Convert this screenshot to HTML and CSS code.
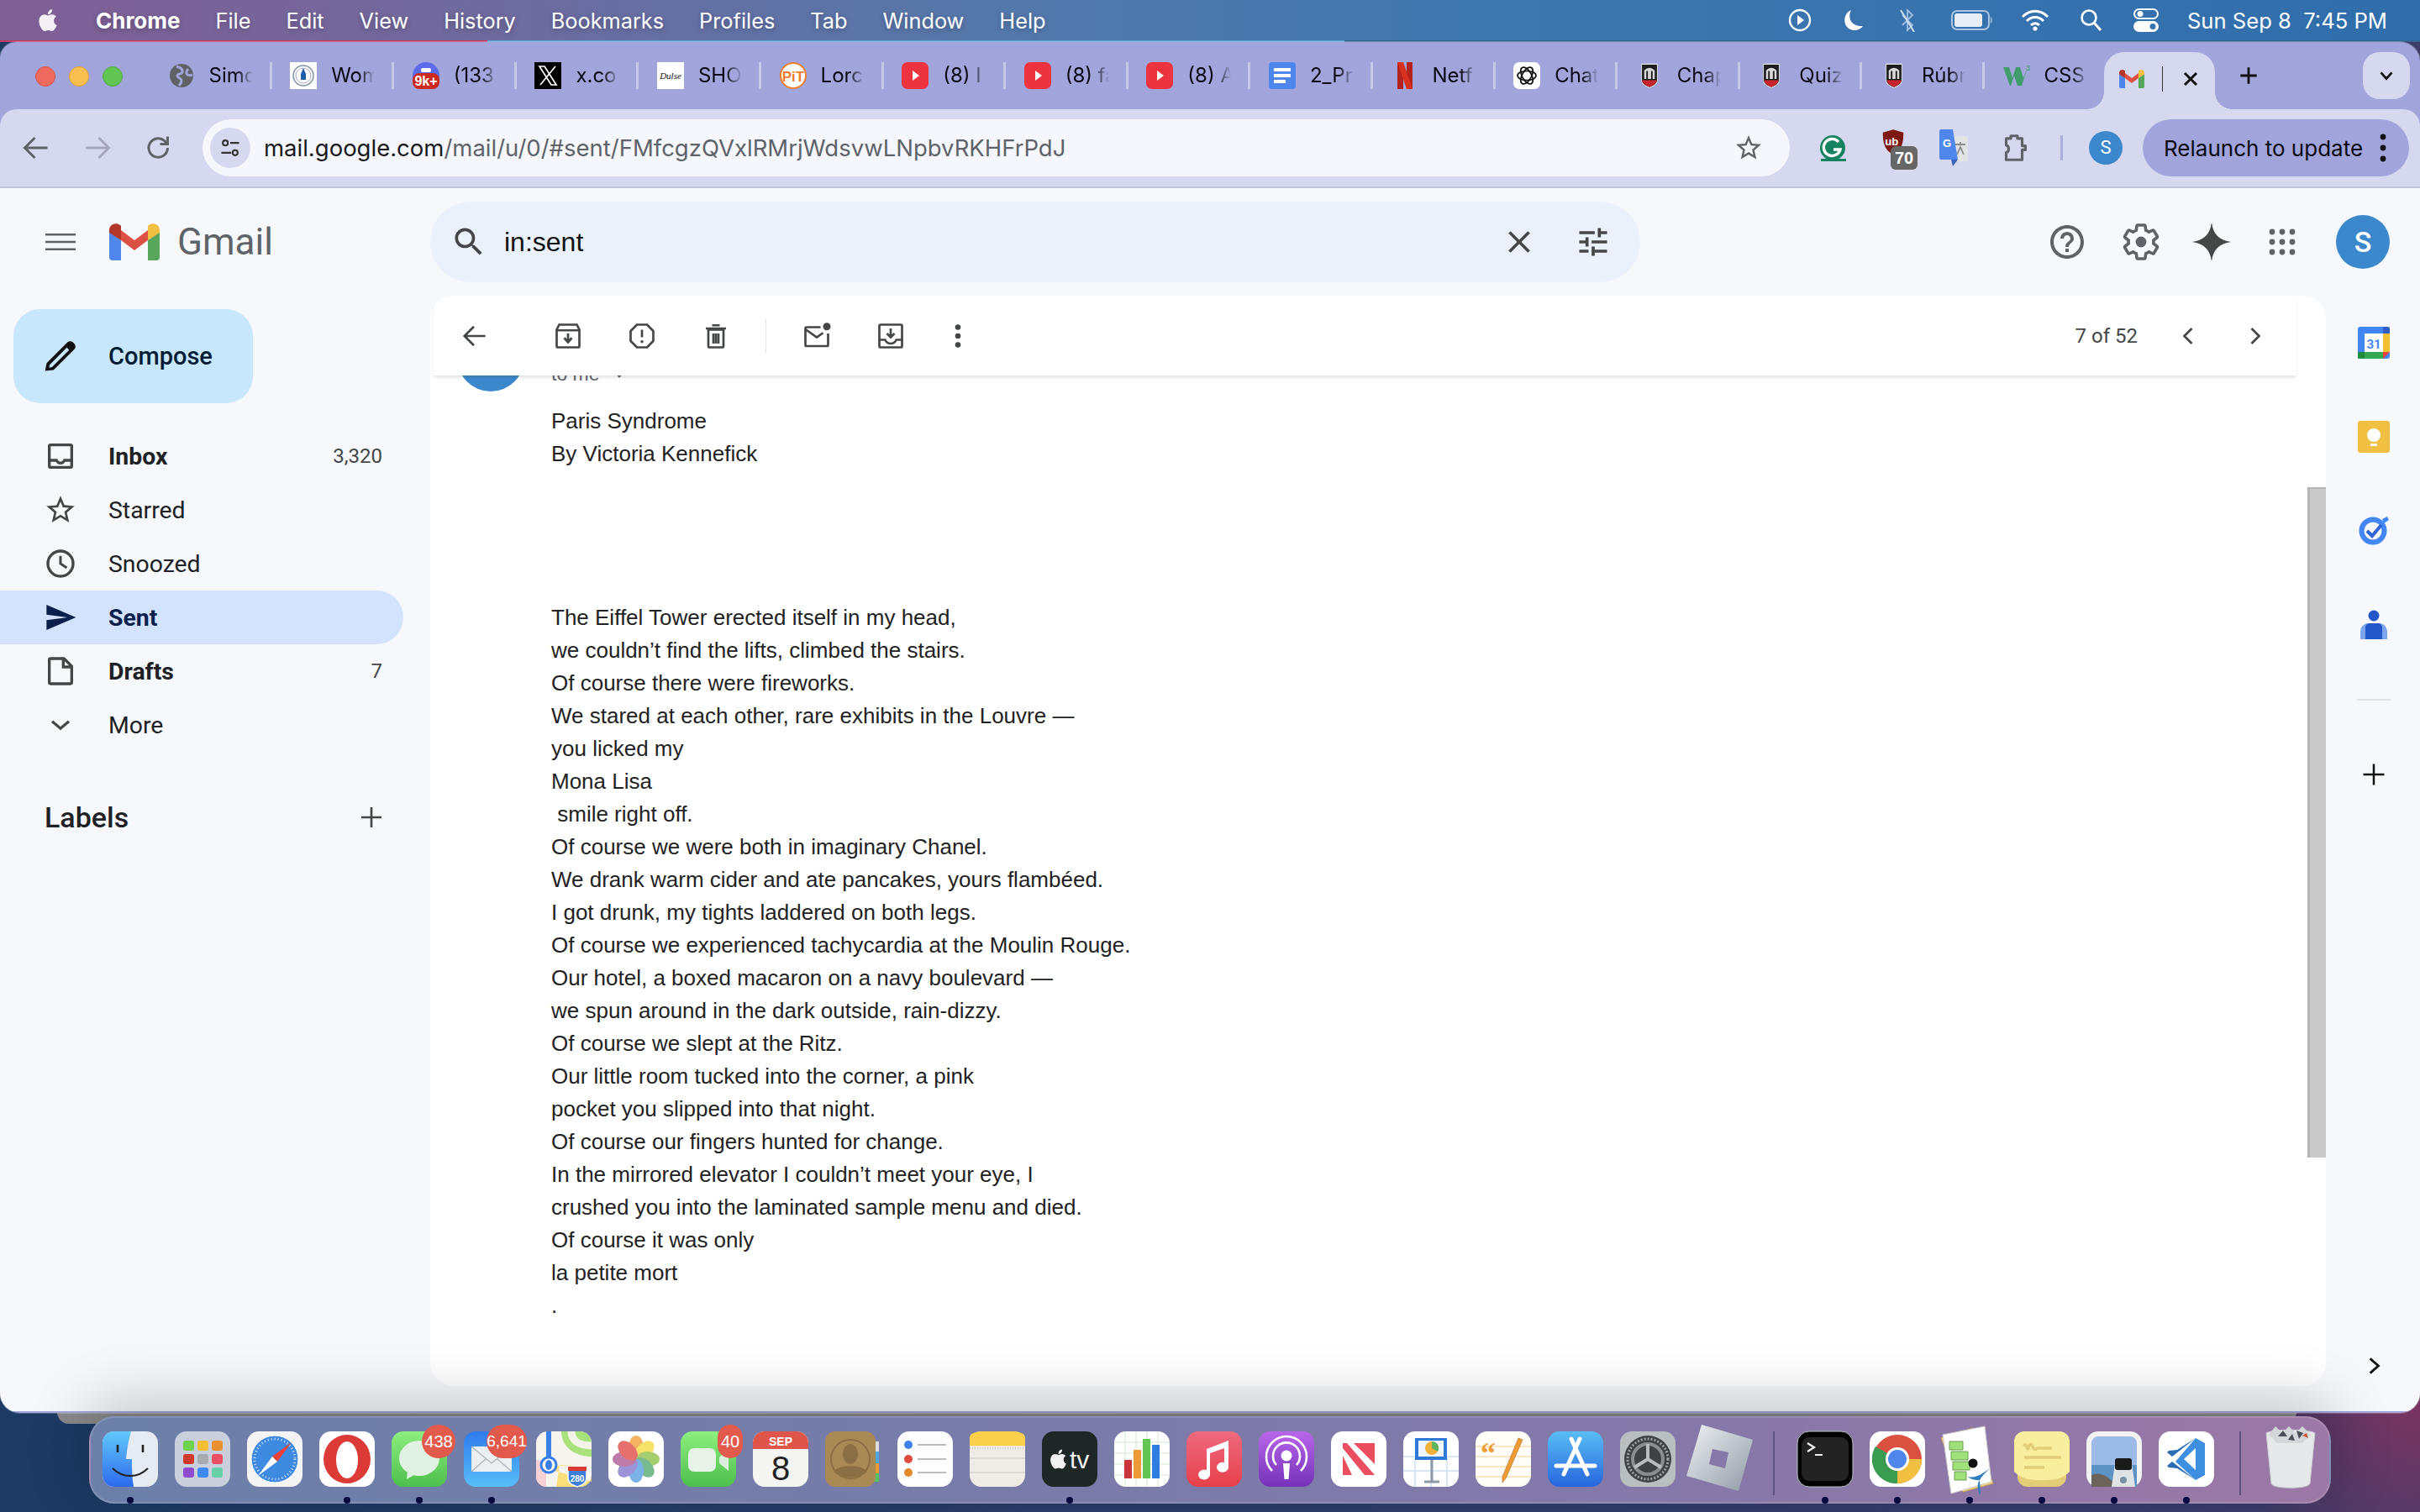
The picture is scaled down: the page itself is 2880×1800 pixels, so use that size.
FILE: index.html
```html
<!DOCTYPE html>
<html lang="en">
<head>
<meta charset="utf-8">
<title>Gmail</title>
<link rel="stylesheet" href="styles.css">
</head>
<body>
<svg class="defs" width="0" height="0" aria-hidden="true">
  <defs>
    <symbol id="apple" viewBox="0 0 24 24"><path d="M12.152 6.896c-.948 0-2.415-1.078-3.96-1.04-2.04.027-3.91 1.183-4.961 3.014-2.117 3.675-.546 9.103 1.519 12.09 1.013 1.454 2.208 3.09 3.792 3.039 1.52-.065 2.09-.987 3.935-.987 1.831 0 2.35.987 3.96.948 1.637-.026 2.676-1.48 3.676-2.948 1.156-1.688 1.636-3.325 1.662-3.415-.039-.013-3.182-1.221-3.22-4.857-.026-3.04 2.48-4.494 2.597-4.559-1.429-2.09-3.623-2.324-4.39-2.376-2-.156-3.675 1.09-4.61 1.09zM15.53 3.83c.843-1.012 1.4-2.427 1.245-3.83-1.207.052-2.662.805-3.532 1.818-.78.896-1.454 2.338-1.273 3.714 1.338.104 2.715-.688 3.559-1.701"/></symbol>
    <symbol id="gm" viewBox="0 0 60 44">
      <path fill="#4f86ec" d="M0 10V40a4 4 0 0 0 4 4H14V20z"/>
      <path fill="#58a65c" d="M46 20V44H56a4 4 0 0 0 4-4V10z"/>
      <path fill="#dd5144" d="M14 8 30 20 46 8V20L30 32 14 20z"/>
      <path fill="#b3362b" d="M0 11V8C0 1 8-2 13 2l1 1V20z"/>
      <path fill="#f1bf42" d="M46 20V3l1-1c5-4 13-1 13 6v3z"/>
    </symbol>
    <symbol id="yt" viewBox="0 0 32 32"><rect y="0" width="32" height="32" rx="7" fill="#ee3340"/><path d="M13 10l8 6-8 6z" fill="#fff"/></symbol>
    <symbol id="uga" viewBox="0 0 32 44" preserveAspectRatio="none">
      <path d="M1 2h30v28c0 7-7 10-15 13C8 40 1 37 1 30z" fill="#1d1d1d" stroke="#e8e8e8" stroke-width="1.500"/>
      <path d="M2 30h28c-1 6-7 9-14 12C9 39 3 36 2 30z" fill="#c8242d"/>
      <path d="M6 28V13q10-9 20 0v15h-4V14h-3v14h-6V14h-3v14z" fill="#d8d8d8"/>
    </symbol>
  </defs>
</svg>

<div class="bg-window"></div>

<header class="menubar">
  <div class="menu-left">
    <svg class="apple" viewBox="0 0 24 24"><use href="#apple"/></svg>
    <span class="menu-app">Chrome</span>
    <span>File</span><span>Edit</span><span>View</span><span>History</span><span>Bookmarks</span><span>Profiles</span><span>Tab</span><span>Window</span><span>Help</span>
  </div>
  <div class="menu-right">
    <svg class="st st-play" viewBox="0 0 28 28"><circle cx="14" cy="14" r="12" fill="none" stroke="#fff" stroke-width="2.4"/><path d="M11 8l8 6-8 6z" fill="#fff"/></svg>
    <svg class="st st-moon" viewBox="0 0 28 28"><path d="M11 2C6 12 12 22 25 21c-4 6-14 7-19 1C1 16 3 5 11 2z" fill="#fff"/></svg>
    <svg class="st st-bt" viewBox="0 0 28 28"><path d="M8 8l12 12-6 6V2l6 6-12 12" fill="none" stroke="#9fc0e2" stroke-width="1.8"/><path d="M6 2l16 26" stroke="#cfe0f0" stroke-width="2"/></svg>
    <svg class="st st-batt" viewBox="0 0 50 24"><rect x="1" y="1" width="44" height="22" rx="6" fill="none" stroke="#a9c7e2" stroke-width="2"/><rect x="4" y="4" width="33" height="16" rx="3" fill="#e8edf5"/><path d="M47 8c2 1 2 7 0 8z" fill="#a9c7e2"/></svg>
    <svg class="st st-wifi" viewBox="0 0 34 26"><path d="M2 9c9-9 21-9 30 0M7 14c6-6 14-6 20 0M12 19c3-3 7-3 10 0" fill="none" stroke="#fff" stroke-width="3"/><circle cx="17" cy="23" r="2.6" fill="#fff"/></svg>
    <svg class="st st-find" viewBox="0 0 28 28"><circle cx="12" cy="11" r="8.5" fill="none" stroke="#fff" stroke-width="2.6"/><path d="M18 17l8 9" stroke="#fff" stroke-width="3"/></svg>
    <svg class="st st-ctl" viewBox="0 0 30 28"><rect x="1" y="1" width="28" height="11" rx="5.5" fill="none" stroke="#fff" stroke-width="2"/><circle cx="8" cy="6.5" r="3.5" fill="#fff"/><rect x="0" y="15" width="30" height="13" rx="6.5" fill="#fff"/><circle cx="23" cy="21.5" r="3.5" fill="#3a74ae"/></svg>
    <span class="clock">Sun Sep 8&nbsp; 7:45 PM</span>
  </div>
</header>
<div class="menu-edge"></div>

<main class="window">
  <div class="tabstrip">
    <div class="lights"><i class="light red"></i><i class="light yellow"></i><i class="light green"></i></div>
    <div class="tab"><svg class="fav" viewBox="0 0 32 32"><circle cx="16" cy="16" r="14" fill="#5f6368"/><path d="M10 5c4 1 8 3 7 7-1 3-5 1-6 4 0 3 5 3 5 6 0 3-2 5-3 6M24 8c-2 2-3 5-1 7 2 1 4 0 6 1" fill="none" stroke="#a1a5db" stroke-width="3"/></svg><span class="tab-title">Simo</span></div>
    <div class="tab"><svg class="fav" viewBox="0 0 32 32"><rect width="32" height="32" fill="#fff"/><circle cx="16" cy="16" r="12" fill="none" stroke="#7f93a8" stroke-width="1.5"/><circle cx="16" cy="16" r="9" fill="#fff" stroke="#aac" stroke-width="1"/><path d="M16 7l3 7v7h-6v-7z" fill="#1d5fa8"/></svg><span class="tab-title">Wom</span></div>
    <div class="tab"><svg class="fav" viewBox="0 0 32 32"><circle cx="16" cy="16" r="16" fill="#5c6bea"/><rect x="10" y="7" width="12" height="5" rx="2" fill="#fff"/><rect y="13" width="32" height="19" rx="8" fill="#cc2a1f"/><text x="16" y="28" class="fav-9k">9k+</text></svg><span class="tab-title">(133</span></div>
    <div class="tab"><svg class="fav" viewBox="0 0 32 32"><rect width="32" height="32" fill="#000"/><path d="M6 5h6l14 22h-6zM25 5 7 27" fill="none" stroke="#fff" stroke-width="1.7"/></svg><span class="tab-title">x.co</span></div>
    <div class="tab"><svg class="fav" viewBox="0 0 32 32"><rect width="32" height="32" fill="#fff"/><text x="16" y="20" class="fav-dulse">Dulse</text></svg><span class="tab-title">SHO</span></div>
    <div class="tab"><svg class="fav" viewBox="0 0 32 32"><circle cx="16" cy="16" r="15" fill="#fff" stroke="#ef7d2e" stroke-width="2"/><text x="16" y="23" class="fav-pit">PiT</text></svg><span class="tab-title">Lorc</span></div>
    <div class="tab"><svg class="fav" viewBox="0 0 32 32"><use href="#yt"/></svg><span class="tab-title">(8) I</span></div>
    <div class="tab"><svg class="fav" viewBox="0 0 32 32"><use href="#yt"/></svg><span class="tab-title">(8) fa</span></div>
    <div class="tab"><svg class="fav" viewBox="0 0 32 32"><use href="#yt"/></svg><span class="tab-title">(8) A</span></div>
    <div class="tab"><svg class="fav" viewBox="0 0 32 32"><rect width="32" height="32" rx="4" fill="#4f86ec"/><path d="M6 7h20v4H6zM6 14h20v4H6zM6 21h14v4H6z" fill="#fff"/></svg><span class="tab-title">2_Pr</span></div>
    <div class="tab"><svg class="fav" viewBox="0 0 32 32"><path d="M7 0h7v32H7zM18 0h7v32h-7z" fill="#b3231c"/><path d="M7 0h7l11 32h-7z" fill="#d8301f"/></svg><span class="tab-title">Netf</span></div>
    <div class="tab"><svg class="fav" viewBox="0 0 32 32"><rect width="32" height="32" rx="7" fill="#fff"/><g fill="none" stroke="#111" stroke-width="1.7"><ellipse cx="16" cy="16" rx="11" ry="5.5"/><ellipse cx="16" cy="16" rx="11" ry="5.5" transform="rotate(60 16 16)"/><ellipse cx="16" cy="16" rx="11" ry="5.5" transform="rotate(120 16 16)"/></g></svg><span class="tab-title">Chat</span></div>
    <div class="tab"><svg class="fav fav-uga" viewBox="0 0 32 44" preserveAspectRatio="none"><use href="#uga"/></svg><span class="tab-title">Chap</span></div>
    <div class="tab"><svg class="fav fav-uga" viewBox="0 0 32 44" preserveAspectRatio="none"><use href="#uga"/></svg><span class="tab-title">Quiz</span></div>
    <div class="tab"><svg class="fav fav-uga" viewBox="0 0 32 44" preserveAspectRatio="none"><use href="#uga"/></svg><span class="tab-title">Rúbr</span></div>
    <div class="tab tab-last"><svg class="fav" viewBox="0 0 32 32"><path d="M0 6h7l4 13 4-13h5l4 13 5-13-7 22h-5l-4-12-4 12H8z" fill="#3f9c6b"/><text x="27" y="10" class="fav-3">3</text></svg><span class="tab-title">CSS</span></div>
    <div class="tab-active">
      <svg class="fav-gm" viewBox="0 0 60 44"><use href="#gm"/></svg>
      <i class="tab-cut"></i>
      <svg class="tab-x" viewBox="0 0 24 24"><path d="M5 5l14 14M19 5 5 19" stroke="#111" stroke-width="3"/></svg>
    </div>
    <svg class="new-tab" viewBox="0 0 24 24"><path d="M12 3v18M3 12h18" stroke="#111" stroke-width="2.6"/></svg>
    <div class="tab-menu"><svg viewBox="0 0 24 24"><path d="M5 8l7 8 7-8" fill="none" stroke="#111" stroke-width="3"/></svg></div>
  </div>

  <div class="toolbar">
    <svg class="nav-ico" viewBox="0 0 24 24"><path d="M21 12H4M11 4l-8 8 8 8" fill="none" stroke="#5f6368" stroke-width="2"/></svg>
    <svg class="nav-ico" viewBox="0 0 24 24"><path d="M3 12h17M13 4l8 8-8 8" fill="none" stroke="#a5a7bd" stroke-width="2"/></svg>
    <svg class="nav-ico" viewBox="0 0 24 24"><path d="M19 12a7.5 7.5 0 1 1-2.5-5.6L19 9M19 3v6h-6" fill="none" stroke="#5f6368" stroke-width="2"/></svg>
    <div class="urlbar">
      <span class="site-info"><svg viewBox="0 0 24 24"><circle cx="7" cy="7" r="2.6" fill="none" stroke="#333" stroke-width="1.8"/><circle cx="17" cy="17" r="2.6" fill="none" stroke="#333" stroke-width="1.8"/><path d="M12 7h9M3 17h10" stroke="#333" stroke-width="1.8"/></svg></span>
      <span class="url"><b>mail.google.com</b>/mail/u/0/#sent/FMfcgzQVxlRMrjWdsvwLNpbvRKHFrPdJ</span>
      <svg class="url-star" viewBox="0 0 24 24"><path d="M22 9.24l-7.19-.62L12 2 9.19 8.63 2 9.24l5.46 4.73L5.82 21 12 17.27 18.18 21l-1.63-7.03L22 9.24zM12 15.4l-3.76 2.27 1-4.28-3.32-2.88 4.38-.38L12 6.1l1.71 4.04 4.38.38-3.32 2.88 1 4.28L12 15.4z" fill="#5f6368"/></svg>
    </div>
    <div class="ext first-ext"><svg class="ext-g" viewBox="0 0 32 32"><circle cx="16" cy="16" r="15" fill="#15835f"/><path d="M23 9a10 10 0 1 0 2 9h-8" fill="none" stroke="#fff" stroke-width="3.4"/><path d="M2 29h30v3H2z" fill="#15835f"/></svg></div>
    <div class="ext ext-ub"><svg class="ext-shield" viewBox="0 0 32 36"><path d="M16 1l14 4c0 14-2 24-14 30C4 29 2 19 2 5z" fill="#7e1a14"/><text x="14" y="23" class="ub-text">ub</text></svg><span class="ext-badge">70</span></div>
    <div class="ext"><svg class="ext-tr" viewBox="0 0 34 44"><path d="M14 8h18a2 2 0 0 1 2 2v26a2 2 0 0 1-2 2H14z" fill="#e3e3e3"/><path d="M19 18h12M25 15v3M21 30l4-9 4 9" fill="none" stroke="#8a8a8a" stroke-width="1.8"/><path d="M2 0h14l6 36H2a2 2 0 0 1-2-2V2a2 2 0 0 1 2-2z" fill="#4f86ec"/><path d="M14 36l2 8 6-8z" fill="#3a62b8"/><text x="9" y="21" class="tr-text">G</text></svg></div>
    <div class="ext"><svg class="ext-puzzle" viewBox="0 0 24 24"><path d="M6 5h3.500V3h5v2H18v5.500h2.500v3H18V21H6v-5.500c2.500-.5 2.500-5 0-5.500z" fill="none" stroke="#5f6368" stroke-width="2" stroke-linejoin="round"/></svg></div>
    <i class="tool-div"></i>
    <span class="tool-avatar">S</span>
    <div class="relaunch"><span>Relaunch to update</span><svg viewBox="0 0 8 36"><circle cx="4" cy="5" r="3.4"/><circle cx="4" cy="18" r="3.4"/><circle cx="4" cy="31" r="3.4"/></svg></div>
  </div>

  <div class="gmail">
    <div class="g-head">
      <div class="g-logo">
        <svg class="g-menu" viewBox="0 0 36 20"><path d="M0 0h36v2.6H0zM0 8.7h36v2.6H0zM0 17.4h36V20H0z" fill="#5f6368"/></svg>
        <svg class="g-m" viewBox="0 0 60 44"><use href="#gm"/></svg>
        <span class="g-word">Gmail</span>
      </div>
      <div class="search">
        <svg class="s-ico" viewBox="0 0 24 24"><path d="M15.5 14h-.79l-.28-.27C15.41 12.59 16 11.11 16 9.5 16 5.91 13.09 3 9.5 3S3 5.91 3 9.5 5.91 16 9.5 16c1.61 0 3.09-.59 4.23-1.57l.27.28v.79l5 4.99L20.49 19l-4.99-5zm-6 0C7.01 14 5 11.99 5 9.5S7.01 5 9.5 5 14 7.01 14 9.5 11.99 14 9.5 14z"/></svg>
        <span class="s-text">in:sent</span>
        <svg class="s-ico s-close" viewBox="0 0 24 24"><path d="M19 6.41L17.59 5 12 10.59 6.41 5 5 6.41 10.59 12 5 17.59 6.41 19 12 13.41 17.59 19 19 17.59 13.41 12z"/></svg>
        <svg class="s-ico s-tune" viewBox="0 0 24 24"><path d="M3 17v2h6v-2H3zM3 5v2h10V5H3zm10 16v-2h8v-2h-8v-2h-2v6h2zM7 9v2H3v2h4v2h2V9H7zm14 4v-2H11v2h10zm-6-4h2V7h4V5h-4V3h-2v6z"/></svg>
      </div>
      <div class="g-actions">
        <svg class="g-ico g-help" viewBox="0 0 24 24"><path fill="#5f6368" d="M11 18h2v-2h-2v2zm1-16C6.48 2 2 6.48 2 12s4.48 10 10 10 10-4.48 10-10S17.52 2 12 2zm0 18c-4.41 0-8-3.59-8-8s3.59-8 8-8 8 3.59 8 8-3.59 8-8 8zm0-14c-2.21 0-4 1.79-4 4h2c0-1.1.9-2 2-2s2 .9 2 2c0 2-3 1.75-3 5h2c0-2.25 3-2.5 3-5 0-2.21-1.79-4-4-4z"/></svg>
        <svg class="g-ico g-gear" viewBox="0 0 24 24"><path fill="none" stroke="#5f6368" stroke-width="1.800" d="M19.43 12.98c.04-.32.07-.64.07-.98s-.03-.66-.07-.98l2.11-1.65c.19-.15.24-.42.12-.64l-2-3.46c-.12-.22-.39-.3-.61-.22l-2.49 1c-.52-.4-1.08-.73-1.69-.98l-.38-2.65C14.46 2.18 14.25 2 14 2h-4c-.25 0-.46.18-.49.42l-.38 2.65c-.61.25-1.17.59-1.69.98l-2.49-1c-.23-.09-.49 0-.61.22l-2 3.46c-.13.22-.07.49.12.64l2.11 1.65c-.04.32-.07.65-.07.98s.03.66.07.98l-2.11 1.65c-.19.15-.24.42-.12.64l2 3.46c.12.22.39.3.61.22l2.49-1c.52.4 1.08.73 1.69.98l.38 2.65c.03.24.24.42.49.42h4c.25 0 .46-.18.49-.42l.38-2.65c.61-.25 1.17-.59 1.69-.98l2.49 1c.23.09.49 0 .61-.22l2-3.46c.12-.22.07-.49-.12-.64l-2.11-1.65z"/><circle cx="12" cy="12" r="3.200" fill="#5f6368"/></svg>
        <svg class="g-ico g-spark" viewBox="0 0 46 46"><path d="M23 0c2 14 9 21 23 23-14 2-21 9-23 23-2-14-9-21-23-23 14-2 21-9 23-23z" fill="#444746"/></svg>
        <svg class="g-ico g-apps" viewBox="0 0 32 32"><g fill="#5f6368"><circle cx="4" cy="4" r="3.4"/><circle cx="16" cy="4" r="3.4"/><circle cx="28" cy="4" r="3.4"/><circle cx="4" cy="16" r="3.4"/><circle cx="16" cy="16" r="3.4"/><circle cx="28" cy="16" r="3.4"/><circle cx="4" cy="28" r="3.4"/><circle cx="16" cy="28" r="3.4"/><circle cx="28" cy="28" r="3.4"/></g></svg>
        <span class="g-avatar">S</span>
      </div>
    </div>

    <div class="g-body">
      <nav class="sidebar">
        <div class="compose">
          <svg viewBox="0 0 24 24"><path d="M2 21.5l1-5L16.5 3a2.6 2.6 0 0 1 3.6 0l.9.9a2.6 2.6 0 0 1 0 3.6L7.5 21zM5 17.6l-.4 1.9 1.900-.4L17.600 8l-1.500-1.600z" fill="#111"/></svg>
          <span>Compose</span>
        </div>
        <ul class="nav">
          <li class="nav-item strong"><svg viewBox="0 0 24 24"><path fill="#444746" d="M19 3H5a2 2 0 0 0-2 2v14a2 2 0 0 0 2 2h14a2 2 0 0 0 2-2V5a2 2 0 0 0-2-2zm0 16H5v-3h3.600c.7 1.200 2 2 3.400 2s2.700-.8 3.400-2H19zm0-5h-4.900c0 1.100-.9 2-2.100 2s-2.100-.9-2.100-2H5V5h14z"/></svg><span>Inbox</span><em>3,320</em></li>
          <li class="nav-item"><svg viewBox="0 0 24 24"><path fill="#444746" d="M22 9.24l-7.19-.62L12 2 9.19 8.63 2 9.24l5.46 4.73L5.82 21 12 17.27 18.18 21l-1.63-7.03L22 9.24zM12 15.4l-3.76 2.27 1-4.28-3.32-2.88 4.38-.38L12 6.1l1.71 4.04 4.38.38-3.32 2.88 1 4.28L12 15.4z"/></svg><span>Starred</span></li>
          <li class="nav-item"><svg viewBox="0 0 24 24"><circle cx="12" cy="12" r="9" fill="none" stroke="#444746" stroke-width="2"/><path d="M12 6.500V12l4.500 3" fill="none" stroke="#444746" stroke-width="1.800"/></svg><span>Snoozed</span></li>
          <li class="nav-item active"><svg viewBox="0 0 24 24"><path fill="#0b1f4d" d="M2.010 21L23 12 2.010 3 2 10l15 2-15 2z"/></svg><span>Sent</span></li>
          <li class="nav-item strong"><svg viewBox="0 0 24 24"><path fill="none" stroke="#444746" stroke-width="2" d="M5 3h9.500L20 8.500V20a1 1 0 0 1-1 1H5a1 1 0 0 1-1-1V4a1 1 0 0 1 1-1zM14 3v6h6"/></svg><span>Drafts</span><em>7</em></li>
          <li class="nav-item"><svg viewBox="0 0 24 24"><path fill="none" stroke="#444746" stroke-width="2" d="M6 9.500l6 5 6-5"/></svg><span>More</span></li>
        </ul>
        <div class="labels"><span>Labels</span><svg viewBox="0 0 24 24"><path d="M12 3v18M3 12h18" stroke="#444746" stroke-width="2"/></svg></div>
      </nav>

      <section class="card">
        <div class="m-bar">
          <svg class="m-ico m-back" viewBox="0 0 24 24"><path d="M21 12H5M12 4.500 4.500 12l7.500 7.500" fill="none" stroke="#444746" stroke-width="2"/></svg>
          <svg class="m-ico" viewBox="0 0 24 24"><path d="M5 3h14l2 4v13a1 1 0 0 1-1 1H4a1 1 0 0 1-1-1V7zM3 7.500h18" fill="none" stroke="#444746" stroke-width="2"/><path d="M12 10v6M9 13.500l3 3.500 3-3.500" fill="none" stroke="#444746" stroke-width="2"/></svg>
          <svg class="m-ico" viewBox="0 0 24 24"><path d="M8 3h8l5 5v8l-5 5H8l-5-5V8z" fill="none" stroke="#444746" stroke-width="2"/><path d="M12 7v6" stroke="#444746" stroke-width="2"/><circle cx="12" cy="16.500" r="1.200" fill="#444746"/></svg>
          <svg class="m-ico" viewBox="0 0 24 24"><path d="M6 7h12v13a1 1 0 0 1-1 1H7a1 1 0 0 1-1-1zM4 6h16M9 3.500h6M10 10v8M12 10v8M14 10v8" fill="none" stroke="#444746" stroke-width="2"/></svg>
          <i class="m-div"></i>
          <svg class="m-ico" viewBox="0 0 24 24"><path d="M15 5H4a1 1 0 0 0-1 1v13a1 1 0 0 0 1 1h16a1 1 0 0 0 1-1v-9M3.500 7l8.500 6 5-3.500" fill="none" stroke="#444746" stroke-width="2"/><circle cx="20" cy="4.500" r="3" fill="#444746"/></svg>
          <svg class="m-ico" viewBox="0 0 24 24"><path d="M4 3h16a1 1 0 0 1 1 1v16a1 1 0 0 1-1 1H4a1 1 0 0 1-1-1V4a1 1 0 0 1 1-1z" fill="none" stroke="#444746" stroke-width="2"/><path d="M12 6v6M9 10l3 3 3-3M3 15h4.500c1 2 2.500 3 4.500 3s3.500-1 4.500-3H21" fill="none" stroke="#444746" stroke-width="2"/></svg>
          <svg class="m-ico m-more" viewBox="0 0 24 24"><circle cx="12" cy="5" r="2.200" fill="#444746"/><circle cx="12" cy="12" r="2.200" fill="#444746"/><circle cx="12" cy="19" r="2.200" fill="#444746"/></svg>
          <div class="pager">
            <span>7 of 52</span>
            <svg class="m-ico" viewBox="0 0 24 24"><path d="M15 6l-6 6 6 6" fill="none" stroke="#444746" stroke-width="2"/></svg>
            <svg class="m-ico" viewBox="0 0 24 24"><path d="M9 6l6 6-6 6" fill="none" stroke="#444746" stroke-width="2"/></svg>
          </div>
        </div>
        <div class="scroller">
          <article class="msg">
            <span class="msg-avatar"></span>
            <div class="msg-main">
              <div class="to-me">to me <svg viewBox="0 0 10 6"><path d="M0 0h10L5 6z" fill="#5f6368"/></svg></div>
              <div class="msg-head"><div>Paris Syndrome</div><div>By Victoria Kennefick</div></div>
              <div class="poem">
                <div>The Eiffel Tower erected itself in my head,</div>
                <div>we couldn’t find the lifts, climbed the stairs.</div>
                <div>Of course there were fireworks.</div>
                <div>We stared at each other, rare exhibits in the Louvre — </div>
                <div>you licked my</div>
                <div>Mona Lisa</div>
                <div>&nbsp;smile right off.</div>
                <div>Of course we were both in imaginary Chanel.</div>
                <div>We drank warm cider and ate pancakes, yours flambéed.</div>
                <div>I got drunk, my tights laddered on both legs.</div>
                <div>Of course we experienced tachycardia at the Moulin Rouge.</div>
                <div>Our hotel, a boxed macaron on a navy boulevard — </div>
                <div>we spun around in the dark outside, rain-dizzy.</div>
                <div>Of course we slept at the Ritz.</div>
                <div>Our little room tucked into the corner, a pink</div>
                <div>pocket you slipped into that night.</div>
                <div>Of course our fingers hunted for change.</div>
                <div>In the mirrored elevator I couldn’t meet your eye, I</div>
                <div>crushed you into the laminated sample menu and died.</div>
                <div>Of course it was only</div>
                <div>la petite mort</div>
                <div>.</div>
              </div>
            </div>
          </article>
          <div class="scrollbar"></div>
        </div>
      </section>

      <aside class="sidepanel">
        <svg class="sp-ico sp-first" viewBox="0 0 38 38"><rect width="38" height="38" rx="3" fill="#4285f4"/><path d="M30 0h5a3 3 0 0 1 3 3v5h-8z" fill="#2f5fc4"/><rect x="30" y="8" width="8" height="22" fill="#f4c030"/><rect y="30" width="30" height="8" fill="#34a853"/><path d="M0 30h8v8H3a3 3 0 0 1-3-3z" fill="#1e8e3e"/><path d="M30 30h8l-8 8z" fill="#ea4335"/><rect x="8" y="8" width="22" height="22" fill="#fff"/><text x="19" y="26" class="cal-31">31</text></svg>
        <svg class="sp-ico" viewBox="0 0 38 38"><rect width="38" height="38" rx="3" fill="#f1bf42"/><circle cx="19" cy="17" r="8" fill="#fff"/><rect x="15" y="27" width="8" height="3" fill="#fff"/></svg>
        <svg class="sp-ico" viewBox="0 0 38 38"><circle cx="18" cy="19" r="13.500" fill="none" stroke="#4285f4" stroke-width="6"/><path d="M11 19l6 6 11-13" fill="none" stroke="#2f62d6" stroke-width="4"/><path d="M29 5l6-3 2 4-6 4z" fill="#4285f4"/></svg>
        <svg class="sp-ico sp-last" viewBox="0 0 38 38"><circle cx="19" cy="8" r="6.500" fill="#2458c8"/><path d="M3 36V28c0-7 4-10 8-11h16c4 1 8 4 8 11v8z" fill="#7ea4ee"/><path d="M9 36V22c0-3 3-5 5-5h10c2 0 5 2 5 5v14z" fill="#2458c8"/></svg>
        <i class="sp-div"></i>
        <svg class="sp-plus" viewBox="0 0 24 24"><path d="M12 2v20M2 12h20" stroke="#111" stroke-width="2"/></svg>
        <svg class="sp-chev" viewBox="0 0 24 24"><path d="M8 4l9 8-9 8" fill="none" stroke="#111" stroke-width="2.600"/></svg>
      </aside>
    </div>
  </div>
</main>

<footer class="dock">
  <div class="app run"><svg viewBox="0 0 66 66"><defs><linearGradient id="fi" x1="0" y1="0" x2="0" y2="1"><stop offset="0" stop-color="#62c8fb"/><stop offset="1" stop-color="#2d6bee"/></linearGradient></defs><rect width="66" height="66" rx="14" fill="#e6ebf1"/><path d="M14 0h20c-3 10-5 22-6 33h7c0 11 0 22 2 33H14A14 14 0 0 1 0 52V14A14 14 0 0 1 14 0z" fill="url(#fi)"/><path d="M18 16v9M48 16v9" stroke="#222" stroke-width="2.600"/><path d="M12 44c12 12 30 12 42 0" fill="none" stroke="#222" stroke-width="2"/></svg></div>
  <div class="app"><svg viewBox="0 0 66 66"><rect width="66" height="66" rx="14" fill="#c9cfdd"/><g><rect x="10" y="11" width="13" height="12" rx="3" fill="#6fd24e"/><rect x="27" y="11" width="13" height="12" rx="3" fill="#f5bd32"/><rect x="44" y="11" width="13" height="12" rx="3" fill="#ea9030"/><rect x="10" y="27" width="13" height="12" rx="3" fill="#cf3a2c"/><rect x="27" y="27" width="13" height="12" rx="3" fill="#a8acb2"/><rect x="44" y="27" width="13" height="12" rx="3" fill="#ea5064"/><rect x="10" y="43" width="13" height="12" rx="3" fill="#8f4bd0"/><rect x="27" y="43" width="13" height="12" rx="3" fill="#3d8bf2"/><rect x="44" y="43" width="13" height="12" rx="3" fill="#66d0a8"/></g></svg></div>
  <div class="app"><svg viewBox="0 0 66 66"><rect width="66" height="66" rx="14" fill="#f4f4f4"/><circle cx="33" cy="33" r="28" fill="#3e8ae0" stroke="#fff" stroke-width="1"/><circle cx="33" cy="33" r="24" fill="none" stroke="#cde1f7" stroke-width="3" stroke-dasharray="1 3"/><path d="M53 13 36 36l-6-6z" fill="#ee4036"/><path d="M13 53l17-23 6 6z" fill="#fff"/></svg></div>
  <div class="app run"><svg viewBox="0 0 66 66"><rect width="66" height="66" rx="14" fill="#fff"/><ellipse cx="33" cy="33" rx="28" ry="29" fill="#dc3a36"/><ellipse cx="33" cy="34" rx="13" ry="22" fill="#fff"/></svg></div>
  <div class="app run"><svg viewBox="0 0 66 66"><defs><linearGradient id="gr" x1="0" y1="0" x2="0" y2="1"><stop offset="0" stop-color="#8def80"/><stop offset="1" stop-color="#4dbf4c"/></linearGradient></defs><rect width="66" height="66" rx="14" fill="url(#gr)"/><ellipse cx="33" cy="32" rx="24" ry="21" fill="#e2f2e2"/><path d="M19 47l-1 10 12-7z" fill="#e2f2e2"/></svg><span class="badge badge-msg">438</span></div>
  <div class="app run"><svg viewBox="0 0 66 66"><defs><linearGradient id="bl" x1="0" y1="0" x2="0" y2="1"><stop offset="0" stop-color="#2f7bee"/><stop offset="1" stop-color="#58bef8"/></linearGradient></defs><rect width="66" height="66" rx="14" fill="url(#bl)"/><rect x="9" y="18" width="48" height="30" rx="3" fill="#eceff2"/><path d="M9 18l24 20 24-20M9 48l18-16M57 48 39 32" fill="none" stroke="#aeb4ba" stroke-width="1.200"/></svg><span class="badge badge-mail">6,641</span></div>
  <div class="app"><svg viewBox="0 0 66 66"><rect width="66" height="66" rx="14" fill="#f7f3ee"/><path d="M30 0h22a14 14 0 0 1 14 14v16C48 30 30 20 30 0z" fill="#a9e27b"/><path d="M42 0c0 10 8 17 24 17" fill="none" stroke="#f3f3e8" stroke-width="9"/><path d="M0 40 66 60V52A14 14 0 0 1 52 66H24L28 40 66 42z" fill="#f7dd6d" opacity=".9"/><path d="M0 34h12v32A12 12 0 0 1 0 52z" fill="#f8d1d6"/><rect x="12" y="0" width="6" height="40" fill="#3a7fe6"/><circle cx="15" cy="40" r="9" fill="#fff" stroke="#3a7fe6" stroke-width="3"/><ellipse cx="15" cy="40" rx="4" ry="6" fill="#3a7fe6"/><path d="M38 42h22v14c0 6-6 8-11 10-5-2-11-4-11-10z" fill="#3d7fd8" stroke="#fff" stroke-width="1.500"/><rect x="38" y="42" width="22" height="5" fill="#d93a32"/><text x="49" y="60" class="map-280">280</text></svg></div>
  <div class="app"><svg viewBox="0 0 66 66"><rect width="66" height="66" rx="14" fill="#fff"/><g opacity=".75"><ellipse cx="33" cy="19" rx="9" ry="14" fill="#f09a2e"/><ellipse cx="33" cy="19" rx="9" ry="14" fill="#f2d93a" transform="rotate(45 33 33)"/><ellipse cx="33" cy="19" rx="9" ry="14" fill="#89bd3e" transform="rotate(90 33 33)"/><ellipse cx="33" cy="19" rx="9" ry="14" fill="#4da36a" transform="rotate(135 33 33)"/><ellipse cx="33" cy="19" rx="9" ry="14" fill="#4f9ae0" transform="rotate(180 33 33)"/><ellipse cx="33" cy="19" rx="9" ry="14" fill="#7a70c8" transform="rotate(225 33 33)"/><ellipse cx="33" cy="19" rx="9" ry="14" fill="#a8508e" transform="rotate(270 33 33)"/><ellipse cx="33" cy="19" rx="9" ry="14" fill="#dd4240" transform="rotate(315 33 33)"/></g></svg></div>
  <div class="app"><svg viewBox="0 0 66 66"><rect width="66" height="66" rx="14" fill="url(#gr)"/><rect x="9" y="20" width="33" height="28" rx="7" fill="#e6f3e6"/><path d="M46 31 57 21v26L46 38z" fill="#dcefdc"/></svg><span class="badge badge-ft">40</span></div>
  <div class="app"><svg viewBox="0 0 66 66"><rect width="66" height="66" rx="14" fill="#f5f5f3"/><path d="M14 0h38a14 14 0 0 1 14 14v7H0v-7A14 14 0 0 1 14 0z" fill="#e0554a"/><text x="33" y="17" class="cal-mon">SEP</text><text x="33" y="58" class="cal-day">8</text></svg></div>
  <div class="app"><svg viewBox="0 0 66 66"><path d="M58 12h6v12h-6z" fill="#ddd"/><path d="M58 24h6v14h-6z" fill="#4fa8e0"/><path d="M58 38h6v12h-6z" fill="#e89a2e"/><path d="M58 50h6v10h-6z" fill="#56c05a"/><rect width="60" height="66" rx="12" fill="#a98a55"/><circle cx="30" cy="33" r="23" fill="none" stroke="#8b6f44" stroke-width="2"/><ellipse cx="30" cy="27" rx="9" ry="12" fill="#8b6f44"/><path d="M10 48c5-9 35-9 40 0-10 9-30 9-40 0z" fill="#8b6f44"/></svg></div>
  <div class="app"><svg viewBox="0 0 66 66"><rect width="66" height="66" rx="14" fill="#fdfdfd"/><circle cx="13" cy="16" r="5" fill="#3f80ea"/><circle cx="13" cy="33" r="5" fill="#df4a3e"/><circle cx="13" cy="49" r="5" fill="#e58a2c"/><path d="M24 16h34M24 33h34M24 49h34" stroke="#bdbdbd" stroke-width="1.800"/></svg></div>
  <div class="app"><svg viewBox="0 0 66 66"><rect width="66" height="66" rx="14" fill="#efece6"/><path d="M14 0h38a14 14 0 0 1 14 14v19H0V14A14 14 0 0 1 14 0z" transform="scale(1 .52)" fill="#f9cf4c"/><path d="M0 20h66" stroke="#ccc" stroke-width="2" stroke-dasharray="1 2"/><path d="M0 32h66M0 49h66" stroke="#d6d4cf" stroke-width="1.500"/></svg></div>
  <div class="app run"><svg viewBox="0 0 66 66"><rect width="66" height="66" rx="14" fill="#1e2725"/><use href="#apple" x="8" y="20" width="23" height="26" fill="#f2f2f2"/><text x="33" y="44" class="tv-text">tv</text></svg></div>
  <div class="app"><svg viewBox="0 0 66 66"><rect width="66" height="66" rx="14" fill="#fff"/><path d="M0 13h66M0 26h66M0 39h66M0 52h66M13 0v66M26 0v66M39 0v66M52 0v66" stroke="#cfeacb" stroke-width="1"/><rect x="12" y="34" width="9" height="22" fill="#c8353a"/><rect x="23" y="22" width="9" height="34" fill="#ee9a38"/><rect x="34" y="9" width="9" height="47" fill="#61c652"/><rect x="45" y="16" width="9" height="40" fill="#2f7de0"/></svg></div>
  <div class="app"><svg viewBox="0 0 66 66"><defs><linearGradient id="mu" x1="0" y1="0" x2="0" y2="1"><stop offset="0" stop-color="#ef6a80"/><stop offset="1" stop-color="#e6404a"/></linearGradient></defs><rect width="66" height="66" rx="14" fill="url(#mu)"/><path d="M24 21 50 11v32a7 6 0 1 1-5-6V20L28 26v26a7 6 0 1 1-4-6z" fill="#fff"/></svg></div>
  <div class="app"><svg viewBox="0 0 66 66"><defs><linearGradient id="po" x1="0" y1="0" x2="0" y2="1"><stop offset="0" stop-color="#b967ea"/><stop offset="1" stop-color="#7432b8"/></linearGradient></defs><rect width="66" height="66" rx="14" fill="url(#po)"/><circle cx="33" cy="29" r="6.500" fill="#fff"/><path d="M29 38h8l-1.500 19h-5z" fill="#fff"/><path d="M21 40a16 16 0 1 1 24 0M16 47a24 24 0 1 1 34 0" fill="none" stroke="#fff" stroke-width="2.600"/></svg></div>
  <div class="app"><svg viewBox="0 0 66 66"><rect width="66" height="66" rx="14" fill="#fff"/><path d="M14 29v23h11zM14 14h5l33 38H40L14 20zM27 14h25v25z" fill="#ea4e60"/></svg></div>
  <div class="app"><svg viewBox="0 0 66 66"><rect width="66" height="66" rx="14" fill="#fff"/><path d="M0 30h66M0 47h66M14 30v36M33 30v36M52 30v36" stroke="#d9e6f3" stroke-width="2"/><rect x="14" y="8" width="38" height="26" fill="#2f78d8"/><rect x="18" y="11" width="30" height="19" fill="#eef5fb"/><circle cx="34" cy="20" r="8" fill="#f2b33c"/><path d="M34 20V12a8 8 0 0 1 7 12z" fill="#60b560"/><path d="M34 34v26" stroke="#8d99a6" stroke-width="3"/><path d="M25 60h18" stroke="#8d99a6" stroke-width="3"/></svg></div>
  <div class="app"><svg viewBox="0 0 66 66"><rect width="66" height="66" rx="14" fill="#fffdf8"/><path d="M0 18h66M0 30h66M0 42h66M0 54h66" stroke="#fbe5c7" stroke-width="2"/><text x="6" y="38" class="pg-quote">“</text><path d="M51 8 56 10 36 56l-4 5 0-7z" fill="#ee9d36" stroke="#a9671a" stroke-width=".600"/></svg></div>
  <div class="app"><svg viewBox="0 0 66 66"><defs><linearGradient id="as" x1="0" y1="0" x2="0" y2="1"><stop offset="0" stop-color="#59bdf4"/><stop offset="1" stop-color="#2766de"/></linearGradient></defs><rect width="66" height="66" rx="14" fill="url(#as)"/><path d="M38 9 19 51M28 9l19 42M10 41h46" fill="none" stroke="#fff" stroke-width="5" stroke-linecap="round"/></svg></div>
  <div class="app"><svg viewBox="0 0 66 66"><rect width="66" height="66" rx="14" fill="#b9bec0"/><circle cx="33" cy="33" r="28" fill="#3e4244"/><circle cx="33" cy="33" r="24" fill="none" stroke="#9fa3a5" stroke-width="3" stroke-dasharray="2 2"/><circle cx="33" cy="33" r="18" fill="none" stroke="#8a8e90" stroke-width="4"/><path d="M33 33V15M33 33 17 43M33 33l16 10" stroke="#b9bdbf" stroke-width="4"/></svg></div>
  <div class="app app-roblox"><svg viewBox="0 0 80 80"><defs><linearGradient id="rb" x1="0" y1="0" x2="1" y2="1"><stop offset="0" stop-color="#f0f2f4"/><stop offset="1" stop-color="#8f9aa6"/></linearGradient></defs><path d="M18 0 79 18 62 79 0 61zM31 29 27 47 46 52 50 33z" fill="url(#rb)" fill-rule="evenodd"/></svg></div>
  <i class="dock-div"></i>
  <div class="app run"><svg viewBox="0 0 66 66"><rect width="66" height="66" rx="14" fill="#000" stroke="#b8c4ca" stroke-width="1"/><rect x="5" y="7" width="56" height="52" rx="9" fill="#232323"/><path d="M12 14l8 5-8 5M21 28h9" fill="none" stroke="#f2f2f2" stroke-width="2.200"/></svg></div>
  <div class="app run"><svg viewBox="0 0 66 66"><rect width="66" height="66" rx="14" fill="#fff"/><circle cx="33" cy="33" r="29" fill="#db5140"/><path d="M33 33 62 33A29 29 0 0 1 33 62z" fill="#f1bf42"/><path d="M33 33 33 62A29 29 0 0 1 7 18z" fill="#3a9c50"/><path d="M33 62 46 38 62 33A29 29 0 0 1 33 62z" fill="#f1bf42"/><circle cx="33" cy="33" r="14" fill="#fff"/><circle cx="33" cy="33" r="11" fill="#4f86ec"/></svg></div>
  <div class="app run app-cp"><svg viewBox="0 0 80 80"><path d="M6 14 44 2l24 66-36 10z" fill="#f6d78a" stroke="#c9a254"/><path d="M8 10 58 0l8 66-48 14z" fill="#fff" stroke="#ccc"/><path d="M16 18h16v10H16zM18 30h20v10H18zM20 42h20v10H20zM22 54h14v10H22z" fill="#9fe07a" stroke="#6ea04e"/><circle cx="44" cy="44" r="5.500" fill="#111"/><path d="M38 60c10 2 18-4 26-10-6 6-10 10-12 14 0 6 2 12 0 18-4-10-2-16 0-18-4 0-10 0-14-4z" fill="#2f80bd"/></svg></div>
  <div class="app run"><svg viewBox="0 0 66 66"><path d="M4 20h58v34a12 12 0 0 1-12 12H16A12 12 0 0 1 4 54z" fill="#e4cd78"/><path d="M12 0h42a12 12 0 0 1 12 12v36c-8 8-16 10-33 10S8 56 0 48V12A12 12 0 0 1 12 0z" fill="#f9ee9e"/><path d="M12 18c2-8 3 6 5 2 2-8 4-4 6 0s4-2 8 0h14M12 31h44M12 43h24" fill="none" stroke="#e2cd78" stroke-width="3.500"/></svg></div>
  <div class="app run"><svg viewBox="0 0 66 66"><rect width="66" height="66" rx="14" fill="#f2f2f2"/><rect x="6" y="6" width="54" height="60" rx="8" fill="#9dbbe8"/><path d="M6 40h54v26H6z" fill="#5d93c4"/><path d="M6 52c10-4 20 0 30 14H6z" fill="#6c645a"/><path d="M34 38h20l4 28H30z" fill="#dfe4e6"/><rect x="34" y="32" width="20" height="14" rx="3" fill="#1a1a1a"/><circle cx="44" cy="58" r="4" fill="#7a8f9f"/></svg></div>
  <div class="app run"><svg viewBox="0 0 66 66"><rect width="66" height="66" rx="14" fill="#fff"/><path d="M44 8 55 14V52L44 58 20 36z" fill="#3f8fe0"/><path d="M44 8 16 30l-6-5 2-2 10-1 22-14zM44 58 16 36l-6 5 2 2 10 1z" fill="#2a6db5"/><path d="M44 20 30 33l14 13z" fill="#fff"/></svg></div>
  <i class="dock-div dock-div-2"></i>
  <div class="app app-trash"><svg viewBox="0 0 60 76"><path d="M1 10c9-5 49-5 58 0l-6 60c-1 7-45 7-46 0z" fill="#e6e8ea" stroke="#c8ccd0"/><path d="M4 12 12 2l8 8 8-8 8 8 8-8 10 10-10 10H14z" fill="#d4d6da"/><path d="M15 14l6-7 5 7zM37 7l8 3-5 7zM27 18l5-7 3 8z" fill="#4a4f58"/><path d="M44 13l5-3 2 6z" fill="#c8553f"/></svg></div>
</footer>
</body>
</html>
```

FILE: styles.css
```css
* { box-sizing: border-box; }
html, body { margin: 0; padding: 0; width: 2880px; height: 1800px; overflow: hidden; }
body {
  position: relative;
  font-family: "Liberation Sans", Arial, sans-serif;
  background:
    radial-gradient(circle at 100% 1660px, #7e3460 0, rgba(126,52,96,0) 240px),
    linear-gradient(90deg, #1c3a63 0, #2c3e6c 50%, #3c3d6b 100%);
}
.defs { position: absolute; }
i, em { font-style: normal; }

.bg-window {
  position: absolute; left: 68px; top: 1600px; width: 2665px; height: 95px;
  background: #8a8a8c; border-radius: 0 0 14px 14px;
}

/* menu bar */
.menubar {
  position: relative; height: 48px; display: flex; align-items: center; justify-content: space-between;
  padding: 0 39px 0 44px; color: #fff;
  font-family: Inter, "Liberation Sans", sans-serif; font-size: 25.3px;
  background: linear-gradient(90deg, #805f95 0, #6f6a9e 20%, #5378ab 42%, #3f78b0 62%, #2f6dab 100%);
}
.menu-left { display: flex; align-items: center; gap: 42px; text-shadow: 0 2px 6px rgba(0,0,0,.25); }
.apple { width: 26px; height: 30px; fill: #f4f0f6; margin-right: 2px; }
.menu-app { font-weight: 700; font-size: 26px; }
.menu-right { display: flex; align-items: center; }
.st { height: 28px; }
.st-play { width: 28px; margin-right: 36px; }
.st-moon { width: 28px; margin-right: 36px; }
.st-bt { width: 28px; margin-right: 38px; }
.st-batt { width: 50px; height: 24px; margin-right: 33px; }
.st-wifi { width: 34px; height: 26px; margin-right: 35px; }
.st-find { width: 28px; margin-right: 37px; }
.st-ctl { width: 30px; margin-right: 34px; }
.clock { white-space: nowrap; font-size: 25.6px; }
.menu-edge { height: 2px; background: linear-gradient(90deg, #c23a5f 0 580px, #5aa0d0 580px 1600px, #35658f 1600px); }

/* window */
.window {
  position: relative; height: 1632px; background: #a1a5db;
  border-radius: 20px 24px 24px 24px; overflow: hidden;
  box-shadow: 0 0 0 1px rgba(255,255,255,.25);
}
.tabstrip { height: 80px; display: flex; align-items: center; }
.lights { display: flex; gap: 16px; padding-left: 42px; margin-right: 32px; }
.light { display: block; width: 24px; height: 24px; border-radius: 50%; margin-top: 2px; }
.red { background: #ee6a5e; border: 1px solid #d8534a; }
.yellow { background: #f6bf4f; border: 1px solid #dea43a; }
.green { background: #61c554; border: 1px solid #52a845; }
.tab {
  flex: none; width: 145.6px; height: 32px; display: flex; align-items: center; padding-left: 21.6px;
  border-right: 3px solid #c6c8ea; position: relative;
}
.tab-last { border-right-color: transparent; }
.fav { width: 32px; height: 32px; flex: none; }
.fav-uga { width: 20px; height: 30px; margin: 0 6px; }
.tab-title {
  margin-left: 17px; width: 60px; white-space: nowrap; color: #0a0a14;
  font-family: Inter, "Liberation Sans", sans-serif; font-size: 24px; line-height: 32px;
  -webkit-mask-image: linear-gradient(90deg, #000 55%, transparent 87%);
  mask-image: linear-gradient(90deg, #000 55%, transparent 87%);
}
.fav-9k { font: 700 16px "Liberation Sans", sans-serif; fill: #fff; text-anchor: middle; }
.fav-dulse { font: italic 11px "Liberation Serif", serif; fill: #111; text-anchor: middle; }
.fav-pit { font: 700 17px "Liberation Sans", sans-serif; fill: #ef7d2e; text-anchor: middle; }
.fav-3 { font: 9px "Liberation Sans", sans-serif; fill: #3f9c6b; }
.tab-active {
  flex: none; position: relative; width: 132px; height: 68px; margin-left: -4px; align-self: flex-end;
  display: flex; align-items: center; padding: 0 0 4px 18px;
  background: #d6d8f0; border-radius: 24px 24px 0 0;
}
.tab-active::before, .tab-active::after {
  content: ""; position: absolute; bottom: 0; width: 20px; height: 20px;
}
.tab-active::before { left: -20px; background: radial-gradient(circle at 0 0, transparent 19.5px, #d6d8f0 20px); }
.tab-active::after { right: -20px; background: radial-gradient(circle at 100% 0, transparent 19.5px, #d6d8f0 20px); }
.fav-gm { width: 30px; height: 40px; flex: none; }
.tab-cut { width: 1px; height: 30px; background: #333; margin-left: 21px; }
.tab-x { width: 24px; height: 24px; margin-left: 21px; }
.new-tab { width: 26px; height: 26px; margin-left: 27px; }
.tab-menu {
  margin-left: auto; margin-right: 12px; width: 56px; height: 56px; border-radius: 20px;
  background: #d6d8f0; display: flex; align-items: center; justify-content: center;
  align-self: flex-start; position: relative; top: 12px;
}
.tab-menu svg { width: 22px; height: 22px; }

/* toolbar */
.toolbar {
  height: 94px; display: flex; align-items: center; padding: 0 0 0 25px; background: #d6d8f0;
  border-bottom: 2px solid #c0c2d8; border-radius: 20px 20px 0 0;
}
.nav-ico { width: 36px; height: 36px; flex: none; margin-right: 37px; }
.nav-ico:nth-child(3) { margin-right: 0; }
.urlbar {
  margin-left: 34px; width: 1889px; height: 68px; border-radius: 34px; background: #f5f7fd;
  display: flex; align-items: center; padding-left: 9px; flex: none;
}
.site-info { width: 48px; height: 48px; border-radius: 50%; background: #d6d8f0; display: flex; align-items: center; justify-content: center; }
.site-info svg { width: 28px; height: 28px; }
.url { margin-left: 16px; font-family: Inter, "Liberation Sans", sans-serif; font-size: 27.5px; color: #5f6368; white-space: nowrap; }
.url b { font-weight: 400; color: #1a1a1a; }
.url-star { width: 36px; height: 36px; margin-left: auto; margin-right: 31px; }
.ext { width: 72px; height: 60px; flex: none; display: flex; align-items: center; justify-content: center; position: relative; }
.first-ext { margin-left: 15px; }
.ext-g { width: 32px; height: 32px; }
.ext-shield { width: 28px; height: 32px; margin: -14px 0 0 0; }
.ub-text { font: 700 15px "Liberation Sans", sans-serif; fill: #fff; text-anchor: middle; }
.ext-badge {
  position: absolute; left: 33px; top: 28px; width: 32px; height: 28px; border-radius: 6px;
  background: #666; color: #fff; font: 700 20px/28px "Liberation Sans", sans-serif; text-align: center;
}
.ext-tr { width: 34px; height: 44px; }
.tr-text { font: 700 13px "Liberation Sans", sans-serif; fill: #fff; text-anchor: middle; }
.ext-puzzle { width: 38px; height: 40px; }
.tool-div { width: 3px; height: 30px; margin-left: 19px; background: #a9b0dc; }
.tool-avatar {
  width: 40px; height: 40px; margin-left: 31px; border-radius: 50%; background: #3c88cc; color: #fff;
  font: 22px/40px Roboto, sans-serif; text-align: center; flex: none;
}
.relaunch {
  margin-left: 24px; width: 317px; height: 68px; border-radius: 34px; background: #a1a5db; flex: none;
  display: flex; align-items: center; padding-left: 25px; color: #0a0a14;
  font-family: Inter, "Liberation Sans", sans-serif; font-size: 26px; white-space: nowrap;
}
.relaunch svg { width: 8px; height: 36px; margin-left: auto; margin-right: 27px; fill: #111; }

/* gmail */
.gmail { height: 1456px; background: #f6f8fc; display: flex; flex-direction: column; }
.g-head { height: 128px; display: flex; align-items: center; flex: none; }
.g-logo { width: 512px; display: flex; align-items: center; padding-left: 54px; flex: none; }
.g-menu { width: 36px; height: 20px; }
.g-m { width: 60px; height: 44px; margin-left: 40px; }
.g-word { margin-left: 21px; font: 400 44px Roboto, sans-serif; color: #5f6368; }
.search {
  width: 1440px; height: 96px; border-radius: 48px; background: #eaf1fb; flex: none;
  display: flex; align-items: center; padding-left: 24px;
}
.s-ico { width: 44px; height: 44px; fill: #444746; flex: none; }
.s-text { margin-left: 20px; font: 32px "Liberation Sans", sans-serif; color: #111; }
.s-close { margin-left: auto; }
.s-tune { margin-left: 44px; margin-right: 34px; }
.g-actions { margin-left: auto; padding-right: 36px; display: flex; align-items: center; }
.g-ico { flex: none; }
.g-help { width: 48px; height: 48px; margin-right: 40px; }
.g-gear { width: 48px; height: 48px; margin-right: 37px; }
.g-spark { width: 46px; height: 46px; margin-right: 45px; }
.g-apps { width: 32px; height: 32px; margin-right: 48px; }
.g-avatar {
  width: 64px; height: 64px; border-radius: 50%; background: #3c88cc; color: #fff;
  font: 500 34px/64px Roboto, sans-serif; text-align: center;
}
.g-body { flex: 1; display: flex; min-height: 0; }

/* sidebar */
.sidebar { width: 512px; flex: none; }
.compose {
  margin: 16px 0 0 16px; width: 285px; height: 112px; border-radius: 32px; background: #c8e6fc;
  display: flex; align-items: center; padding-left: 34px; color: #001d35;
  font: 500 29px Roboto, sans-serif;
}
.compose svg { width: 44px; height: 44px; }
.compose span { margin-left: 35px; }
.nav { list-style: none; margin: 31px 0 0; padding: 0; width: 480px; }
.nav-item {
  height: 64px; margin-bottom: 0.1px; display: flex; align-items: center; padding: 0 25px 0 52px;
  font: 400 28.4px Roboto, sans-serif; color: #202124; border-radius: 0 32px 32px 0;
}
.nav-item svg { width: 40px; height: 40px; flex: none; }
.nav-item span { margin-left: 37px; }
.nav-item em { margin-left: auto; font-size: 24px; color: #444746; }
.strong { font-weight: 700; }
.strong em { font-weight: 400; }
.active { background: #d3e3fd; color: #0b1f4d; font-weight: 700; }
.labels { width: 458px; margin-top: 58px; padding-left: 53px; display: flex; align-items: center; justify-content: space-between; font: 500 34px Roboto, sans-serif; color: #202124; }
.labels svg { width: 32px; height: 32px; }

/* card */
.card { width: 2256px; height: 1298px; background: #fff; border-radius: 28px; display: flex; flex-direction: column; overflow: hidden; flex: none; }
.m-bar {
  height: 95px; flex: none; margin: 0 35px 0 4px; padding: 0 29px 0 28px; position: relative; z-index: 2;
  display: flex; align-items: center; background: #fff; box-shadow: 0 3px 4px -1px rgba(60,64,67,.18);
}
.m-ico { width: 40px; height: 40px; padding: 2px; flex: none; margin-right: 48px; }
.m-ico path { stroke-width: 1.8; }
.m-back { margin-right: 72px; }
.m-bar > .m-ico:nth-child(4) { margin-right: 39px; }
.m-div { width: 1px; height: 40px; background: #e3e3e3; margin-right: 40px; }
.m-bar > .m-ico:nth-child(7) { margin-right: 40px; }
.pager { margin-left: auto; display: flex; align-items: center; gap: 40px; font: 24px Roboto, sans-serif; color: #444746; }
.pager .m-ico { margin: 0; }
.scroller { flex: 1; position: relative; overflow: hidden; min-height: 0; }
.msg { display: flex; margin-top: -61px; padding-left: 32px; }
.msg-avatar { width: 80px; height: 80px; border-radius: 50%; background: #3c88cc; flex: none; }
.msg-main { margin-left: 32px; font-size: 26px; line-height: 39px; color: #222; }
.to-me { height: 96px; padding-top: 44px; font-size: 23px; line-height: 30px; color: #5f6368; }
.to-me svg { width: 10px; height: 6px; margin-left: 12px; vertical-align: middle; }
.msg-head { margin-bottom: 156px; }
.scrollbar { position: absolute; right: 0; top: 133px; width: 22px; height: 798px; background: #c9c9c9; border-left: 3px solid #b4b4b4; border-top: 2px solid #b4b4b4; }

/* side panel */
.sidepanel { flex: 1; display: flex; flex-direction: column; align-items: center; padding-left: 1px; position: relative; }
.sp-ico { width: 38px; height: 38px; flex: none; margin-bottom: 74px; }
.sp-first { margin-top: 37px; }
.sp-last { margin-bottom: 69px; }
.cal-31 { font: 700 15px Roboto, sans-serif; fill: #4285f4; text-anchor: middle; }
.sp-div { width: 40px; height: 2px; background: #e3e4e6; }
.sp-plus { width: 30px; height: 30px; margin-top: 73px; }
.sp-chev { width: 26px; height: 26px; margin-top: 676px; }

/* dock */
.dock {
  position: relative; z-index: 3; margin: 4px 0 0 106px; width: 2668px; height: 104px; border-radius: 30px;
  display: flex; align-items: flex-start; padding: 16px 0 0 14px;
  background: linear-gradient(90deg, #6c80a9 0, #7a7ba9 45%, #8778a8 75%, #9c78a6 100%);
  border: 2px solid rgba(255,255,255,.14);
  box-shadow: 0 -14px 70px 6px rgba(0,0,0,.2);
}
.app { position: relative; flex: none; width: 66px; height: 66px; margin-right: 20px; }
.app > svg { display: block; width: 66px; height: 66px; overflow: visible; }
.run::after {
  content: ""; position: absolute; left: 29px; top: 78px; width: 8px; height: 8px; border-radius: 50%; background: #05083f;
}
.badge {
  position: absolute; height: 40px; min-width: 40px; border-radius: 20px; background: #e25a4b; color: #fff; text-align: center;
  font: 20px/40px "Liberation Sans", sans-serif; padding: 0 2px;
}
.badge-msg { left: 36px; top: -8px; }
.badge-mail { left: 27px; top: -8px; width: 48px; padding: 0; font-size: 19px; }
.badge-ft { left: 44px; top: -8px; width: 30px; min-width: 30px; padding: 0; }
.cal-mon { font: 700 14px "Liberation Sans", sans-serif; fill: #fff; text-anchor: middle; }
.cal-day { font: 40px "Liberation Sans", sans-serif; fill: #222; text-anchor: middle; }
.map-280 { font: 700 10px "Liberation Sans", sans-serif; fill: #fff; text-anchor: middle; }
.tv-text { font: 500 30px "Liberation Sans", sans-serif; fill: #f2f2f2; }
.pg-quote { font: 700 36px "Liberation Serif", serif; fill: #ee9d36; }
.app-roblox { width: 80px; margin: -8px 13px 0 -7px; height: 80px; }
.app-roblox > svg { width: 80px; height: 80px; }
.dock-div { flex: none; width: 2px; height: 76px; margin: 0 27px 0 10px; background: #5d5180; }
.app-cp > svg { width: 80px; height: 80px; margin: -6px 0 0 -7px; }
.dock-div-2 { margin: 0 29px 0 10px; }
.app-trash { width: 60px; }
.app-trash > svg { width: 60px; height: 76px; margin-top: -8px; }
```
